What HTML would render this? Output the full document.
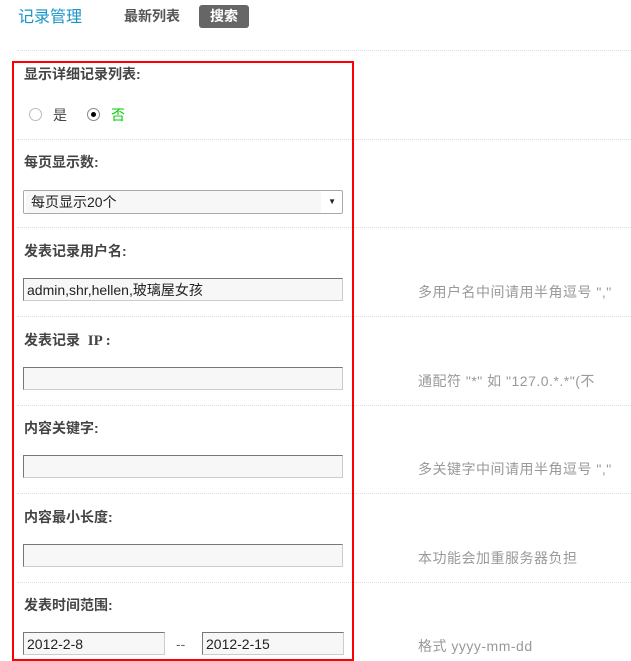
<!DOCTYPE html>
<html><head><meta charset="utf-8"><style>
body{margin:0;width:631px;height:661px;overflow:hidden;background:#fff;font-family:"Liberation Sans","Noto Sans CJK SC",sans-serif;position:relative}
.a{position:absolute;white-space:nowrap}
.sep{position:absolute;left:17px;right:0;border-top:1px dotted #cfe0ee;height:0}
.lbl{position:absolute;left:24px;font-size:14px;font-weight:bold;color:#444}
.inp{position:absolute;left:23px;height:23px;background:#f7f7f7;border:1px solid #ccc;border-top-color:#777;border-left-color:#777;font-size:14px;color:#222;line-height:23px;padding-left:3px;box-sizing:border-box;width:320px}
.hint{position:absolute;left:418px;font-size:14px;color:#999;letter-spacing:0.5px}
</style></head><body>
<div class="a" style="left:18px;top:3px;font-size:16px;color:#1794c8">记录管理</div>
<div class="a" style="left:124px;top:6px;font-size:14px;font-weight:bold;color:#555">最新列表</div>
<div class="a" style="left:199px;top:5px;width:50px;height:23px;background:#666;border-radius:3px;color:#fff;font-weight:bold;font-size:14px;text-align:center;line-height:23px">搜索</div>
<div class="sep" style="top:50px"></div>
<div class="sep" style="top:139px"></div>
<div class="sep" style="top:227px"></div>
<div class="sep" style="top:316px"></div>
<div class="sep" style="top:405px"></div>
<div class="sep" style="top:493px"></div>
<div class="sep" style="top:582px"></div>
<div class="a" style="left:12px;top:61px;width:338px;height:596px;border:2px solid #f00"></div>

<div class="lbl" style="top:64px">显示详细记录列表:</div>
<div class="a" style="left:29px;top:108px;width:11px;height:11px;border:1px solid #bbb;border-radius:50%;background:#fff"></div>
<div class="a" style="left:53px;top:105px;font-size:14px;color:#444">是</div>
<div class="a" style="left:87px;top:108px;width:11px;height:11px;border:1px solid #888;border-radius:50%;background:#fff"></div>
<div class="a" style="left:91px;top:112px;width:5px;height:5px;border-radius:50%;background:#000"></div>
<div class="a" style="left:111px;top:105px;font-size:14px;color:#0c0">否</div>

<div class="lbl" style="top:152px">每页显示数:</div>
<div class="a" style="left:23px;top:190px;width:320px;height:24px;border:1px solid #aaa;border-radius:2px;box-sizing:border-box;font-size:14px;line-height:22px;color:#222"><span style="display:inline-block;background:#f7f7f7;width:290px;padding-left:5px;margin-left:2px">每页显示20个</span><span style="position:absolute;right:6px;top:0;font-size:8px">▼</span></div>

<div class="lbl" style="top:241px">发表记录用户名:</div>
<div class="inp" style="top:278px">admin,shr,hellen,玻璃屋女孩</div>
<div class="hint" style="top:282px">多用户名中间请用半角逗号 ","</div>

<div class="lbl" style="top:330px">发表记录 &nbsp;<span style="font-family:'Liberation Serif',serif;font-size:15px">IP :</span></div>
<div class="inp" style="top:367px"></div>
<div class="hint" style="top:371px">通配符 "*" 如 "127.0.*.*"(不</div>

<div class="lbl" style="top:418px">内容关键字:</div>
<div class="inp" style="top:455px"></div>
<div class="hint" style="top:459px">多关键字中间请用半角逗号 ","</div>

<div class="lbl" style="top:507px">内容最小长度:</div>
<div class="inp" style="top:544px"></div>
<div class="hint" style="top:548px">本功能会加重服务器负担</div>

<div class="lbl" style="top:595px">发表时间范围:</div>
<div class="inp" style="top:632px;width:142px">2012-2-8</div>
<div class="a" style="left:176px;top:636px;font-size:14px;color:#666">--</div>
<div class="inp" style="top:632px;left:202px;width:142px">2012-2-15</div>
<div class="hint" style="top:636px">格式 yyyy-mm-dd</div>
</body></html>
